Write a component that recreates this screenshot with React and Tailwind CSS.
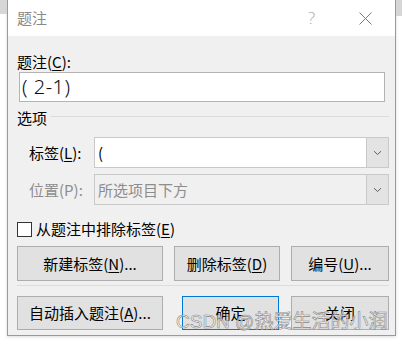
import React from "react";

function Chevron() {
  return (
    <svg width="9" height="6" viewBox="0 0 9 6" fill="none">
      <path d="M1 1.2 L4.5 4.5 L8 1.2" stroke="#606060" strokeWidth="1" />
    </svg>
  );
}

function Combo({ value, disabled }) {
  return (
    <div
      className={`flex h-[31px] flex-1 border border-[#c9c9c9] ${
        disabled ? "bg-[#f0f0f0]" : "bg-white"
      }`}
    >
      <div
        className={`flex flex-1 items-center pl-[3px] text-[15px] ${
          disabled ? "text-[#8d8d8d]" : "text-black"
        }`}
      >
        {value}
      </div>
      <div className="flex w-[22px] items-center justify-center border-l border-[#c9c9c9] bg-[#e3e3e3]">
        <Chevron />
      </div>
    </div>
  );
}

function Btn({ children, w, ml = "", primary }) {
  return (
    <button
      className={`${w} ${ml} flex h-full items-center justify-center border bg-[#e1e1e1] text-[15px] text-black ${
        primary ? "border-[#0078d7]" : "border-[#adadad]"
      }`}
    >
      {children}
    </button>
  );
}

export default function App() {
  return (
    <div className="relative h-[343px] w-[402px] overflow-hidden bg-white font-['Noto_Sans_CJK_SC',sans-serif] leading-[20px]">
      {/* corners of the window behind */}
      <div className="absolute left-0 top-0 h-[14px] w-[7px] bg-[#d6d6d6]" />
      <div className="absolute right-0 top-0 h-[16px] w-[6px] bg-[#d6d6d6]" />

      <div className="ml-[7px] flex h-[336px] w-[389px] flex-col border-x border-b border-[#9a9a9a] bg-[#f0f0f0] shadow-[0_1px_3px_rgba(0,0,0,0.15)]">
        {/* Title bar */}
        <div className="flex h-[36px] items-center bg-white pl-[9px] text-[15px] text-[#8a8a8a]">
          <span>题注</span>
          <span className="ml-auto mr-[44px] font-['Noto_Sans',sans-serif] text-[17px] font-extralight text-[#999]">
            ?
          </span>
          <svg className="mr-[23px]" width="13" height="13" viewBox="0 0 13 13">
            <path d="M0.5 0.5 L12.5 12.5 M12.5 0.5 L0.5 12.5" stroke="#7a7a7a" strokeWidth="1" />
          </svg>
        </div>

        {/* Body */}
        <div className="flex flex-1 flex-col pl-[9px] pr-[6px] text-black">
          <div className="mt-[17px] h-[18px] text-[15px] leading-[18px]">
            题注(<u className="underline-offset-2">C</u>):
          </div>
          <div className="ml-[2px] mt-[1px] flex h-[30px] w-[366px] items-center border border-[#b4b4b4] bg-white pl-[2px] font-['Noto_Sans',sans-serif] text-[20px] font-light tracking-[0.5px] text-[#111]">
            ( 2-1)
          </div>

          <div className="mt-[6px] flex h-[20px] items-center text-[15px]">
            <span>选项</span>
            <div className="ml-[3px] mb-[3px] flex-1 border-t border-[#dcdcdc]" />
          </div>

          <div className="mt-[9px] flex items-center pl-[12px]">
            <div className="w-[65px] text-[15px]">
              标签(<u className="underline-offset-2">L</u>):
            </div>
            <Combo value="(" />
          </div>
          <div className="mt-[6px] flex items-center pl-[12px]">
            <div className="w-[65px] text-[15px] text-[#8d8d8d]">位置(P):</div>
            <Combo value="所选项目下方" disabled />
          </div>

          <div className="mt-[14px] flex h-[20px] items-center text-[15px]">
            <div className="h-[15px] w-[15px] border border-[#333] bg-white" />
            <span className="ml-[4px]">
              从题注中排除标签(<u className="underline-offset-2">E</u>)
            </span>
          </div>

          <div className="mt-[7px] flex h-[35px]">
            <Btn w="w-[146px]">
              新建标签(<u className="underline-offset-2">N</u>)...
            </Btn>
            <Btn w="w-[106px]" ml="ml-[11px]">
              删除标签(<u className="underline-offset-2">D</u>)
            </Btn>
            <Btn w="w-[98px]" ml="ml-[11px]">
              编号(<u className="underline-offset-2">U</u>)...
            </Btn>
          </div>

          <div className="mt-[4px] border-t border-[#dcdcdc]" />

          <div className="mt-[10px] flex h-[34px]">
            <Btn w="w-[146px]">
              自动插入题注(<u className="underline-offset-2">A</u>)...
            </Btn>
            <Btn w="w-[97px]" ml="ml-[19px]" primary>
              确定
            </Btn>
            <Btn w="w-[98px]" ml="ml-[12px]">
              关闭
            </Btn>
          </div>
        </div>
      </div>

      {/* watermark */}
      <div className="absolute left-[176px] top-[309px] text-[19px] leading-[22px] text-white/70 [-webkit-text-stroke:0.6px_#888]">
        <span className="font-['Liberation_Sans',sans-serif]">CSDN @</span>热爱生活的小润
      </div>
    </div>
  );
}
